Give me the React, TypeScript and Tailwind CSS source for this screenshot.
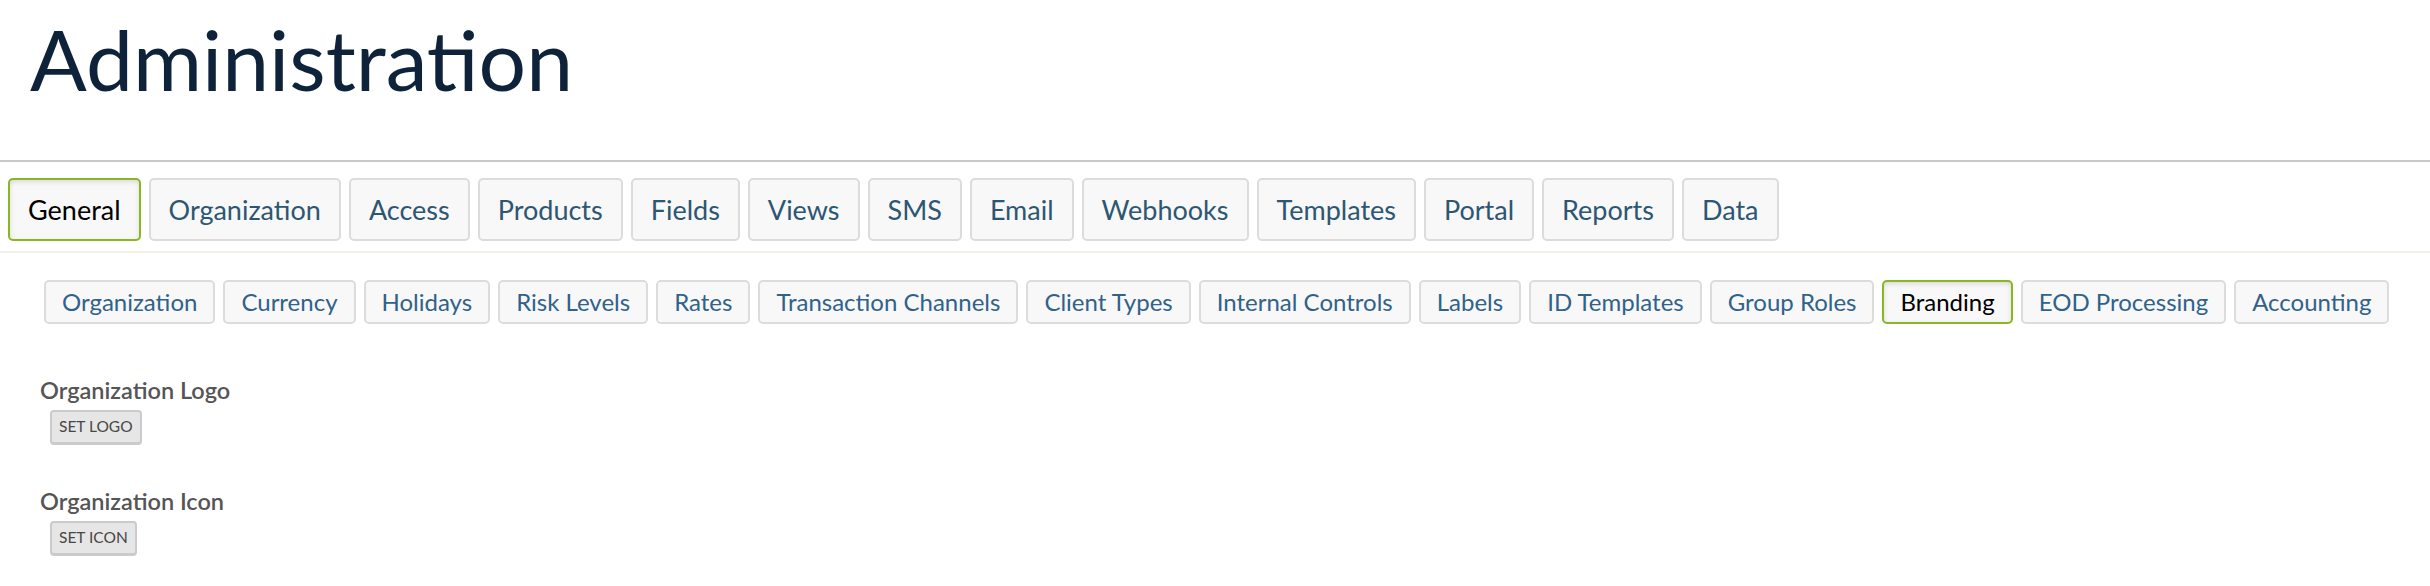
import React from 'react';

const mainTabs = [
  'General',
  'Organization',
  'Access',
  'Products',
  'Fields',
  'Views',
  'SMS',
  'Email',
  'Webhooks',
  'Templates',
  'Portal',
  'Reports',
  'Data',
];

const subTabs = [
  'Organization',
  'Currency',
  'Holidays',
  'Risk Levels',
  'Rates',
  'Transaction Channels',
  'Client Types',
  'Internal Controls',
  'Labels',
  'ID Templates',
  'Group Roles',
  'Branding',
  'EOD Processing',
  'Accounting',
];

function Tab({ label, active, size }: { label: string; active: boolean; size: 'main' | 'sub' }) {
  const base =
    size === 'main'
      ? 'h-[63px] px-[18px] text-[27px]'
      : 'h-[44px] px-[16px] text-[24px]';
  const state = active
    ? 'border-[#8ab623] text-black shadow-[inset_0_2px_5px_rgba(0,0,0,0.12)]'
    : size === 'main'
      ? 'border-[#dcdcdc] text-[#2d5673]'
      : 'border-[#dcdcdc] text-[#30628a]';
  return (
    <button
      className={`flex items-center rounded-[5px] border-2 bg-[#f8f8f8] leading-none whitespace-nowrap ${base} ${state}`}
    >
      {label}
    </button>
  );
}

function SettingRow({ label, action }: { label: string; action: string }) {
  return (
    <div className="flex flex-col items-start">
      <div className="text-[23.5px] font-semibold leading-[28px] text-[#555555]">{label}</div>
      <button className="mt-[6px] ml-[10px] h-[35px] rounded-[4px] border-2 border-b-[3px] border-[#cbcbcb] bg-[#e6e6e6] px-[7px] text-[15.5px] leading-none text-[#474747]">
        {action}
      </button>
    </div>
  );
}

export default function App() {
  return (
    <div className="min-h-screen bg-white font-['Lato','Noto_Sans',sans-serif]">
      <div className="h-[162px] border-b-2 border-[#c8c8c8] px-[30px] pt-[9px]">
        <h1 className="text-[84px] leading-[100px] font-normal text-[#0e2339]">Administration</h1>
      </div>

      <div className="flex gap-[8px] border-b-2 border-[#f1efe7] px-[8px] pt-[16px] pb-[10px]">
        {mainTabs.map((t) => (
          <Tab key={t} label={t} active={t === 'General'} size="main" />
        ))}
      </div>

      <div className="flex gap-[8px] pl-[44px] pt-[27px]">
        {subTabs.map((t) => (
          <Tab key={t} label={t} active={t === 'Branding'} size="sub" />
        ))}
      </div>

      <div className="flex flex-col gap-[42px] pl-[40px] pt-[52px]">
        <SettingRow label="Organization Logo" action="SET LOGO" />
        <SettingRow label="Organization Icon" action="SET ICON" />
      </div>
    </div>
  );
}
